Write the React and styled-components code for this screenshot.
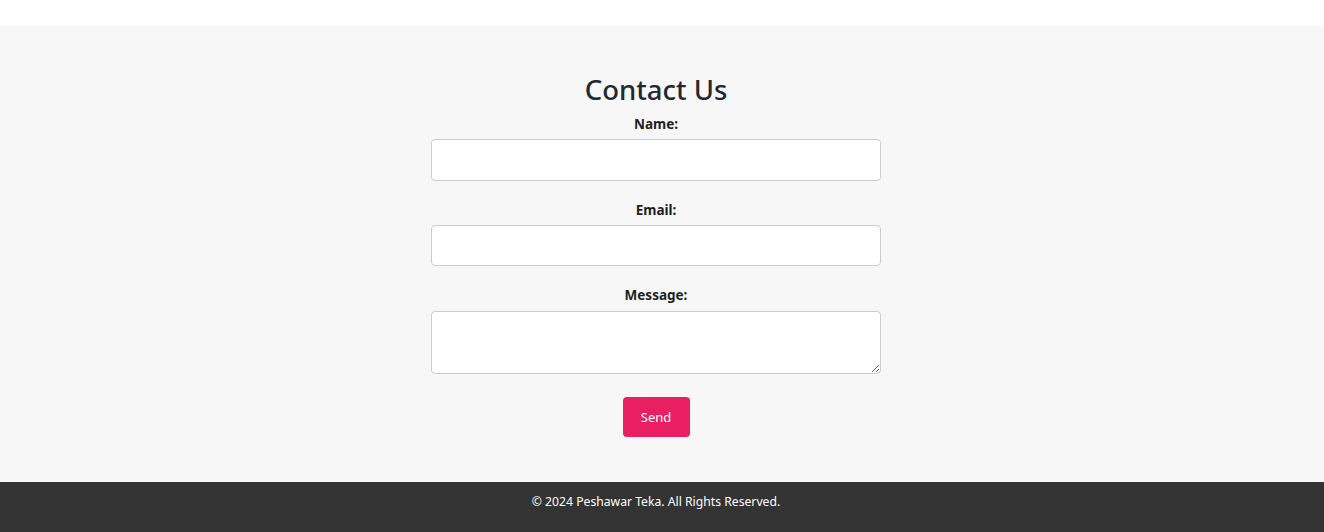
import React from "react";
import styled, { createGlobalStyle } from "styled-components";

const Global = createGlobalStyle`
  html, body { margin: 0; padding: 0; background: #ffffff; }
  body { font-family: "Noto Sans", "Open Sans", sans-serif; color: #222; }
  * { box-sizing: border-box; }
`;

const Header = styled.header`
  height: 26px;
  background: #ffffff;
`;

const Section = styled.section`
  background: #f7f7f7;
  padding: 46px 12px 45px 0;
  display: flex;
  flex-direction: column;
  align-items: center;
`;

const Title = styled.h2`
  margin: 0 0 6px;
  font-size: 27.5px;
  line-height: 36px;
  font-weight: 500;
  color: #222831;
`;

const Form = styled.form`
  width: 450px;
  display: flex;
  flex-direction: column;
  align-items: center;
`;

const Label = styled.label`
  font-size: 13.5px;
  line-height: 20px;
  font-weight: 700;
  color: #1f1f1f;
  margin-bottom: 5px;
`;

const Input = styled.input`
  width: 450px;
  height: ${(p) => p.$h || 42}px;
  border: 1px solid #cccccc;
  border-radius: 4px;
  background: #ffffff;
  margin-bottom: 19px;
  padding: 8px;
  font: inherit;
`;

const TextArea = styled.textarea`
  width: 450px;
  height: 63px;
  border: 1px solid #cccccc;
  border-radius: 4px;
  background: #ffffff;
  margin: 1px 0 23px;
  padding: 8px;
  font: inherit;
  display: block;
`;

const Button = styled.button`
  width: 67px;
  height: 40px;
  border: none;
  border-radius: 4px;
  background: #e91e63;
  color: #ffffff;
  font-family: inherit;
  font-size: 13px;
  cursor: pointer;
`;

const Footer = styled.footer`
  background: #333333;
  color: #ffffff;
  height: 50px;
  padding: 11px 12px 0 0;
  text-align: center;
  font-size: 12.2px;
  line-height: 18px;
`;

export default function App() {
  return (
    <>
      <Global />
      <Header />
      <Section>
        <Title>Contact Us</Title>
        <Form onSubmit={(e) => e.preventDefault()}>
          <Label htmlFor="name">Name:</Label>
          <Input id="name" type="text" />
          <Label htmlFor="email">Email:</Label>
          <Input id="email" type="email" $h={41} />
          <Label htmlFor="message">Message:</Label>
          <TextArea id="message" />
          <Button type="submit">Send</Button>
        </Form>
      </Section>
      <Footer>© 2024 Peshawar Teka. All Rights Reserved.</Footer>
    </>
  );
}
